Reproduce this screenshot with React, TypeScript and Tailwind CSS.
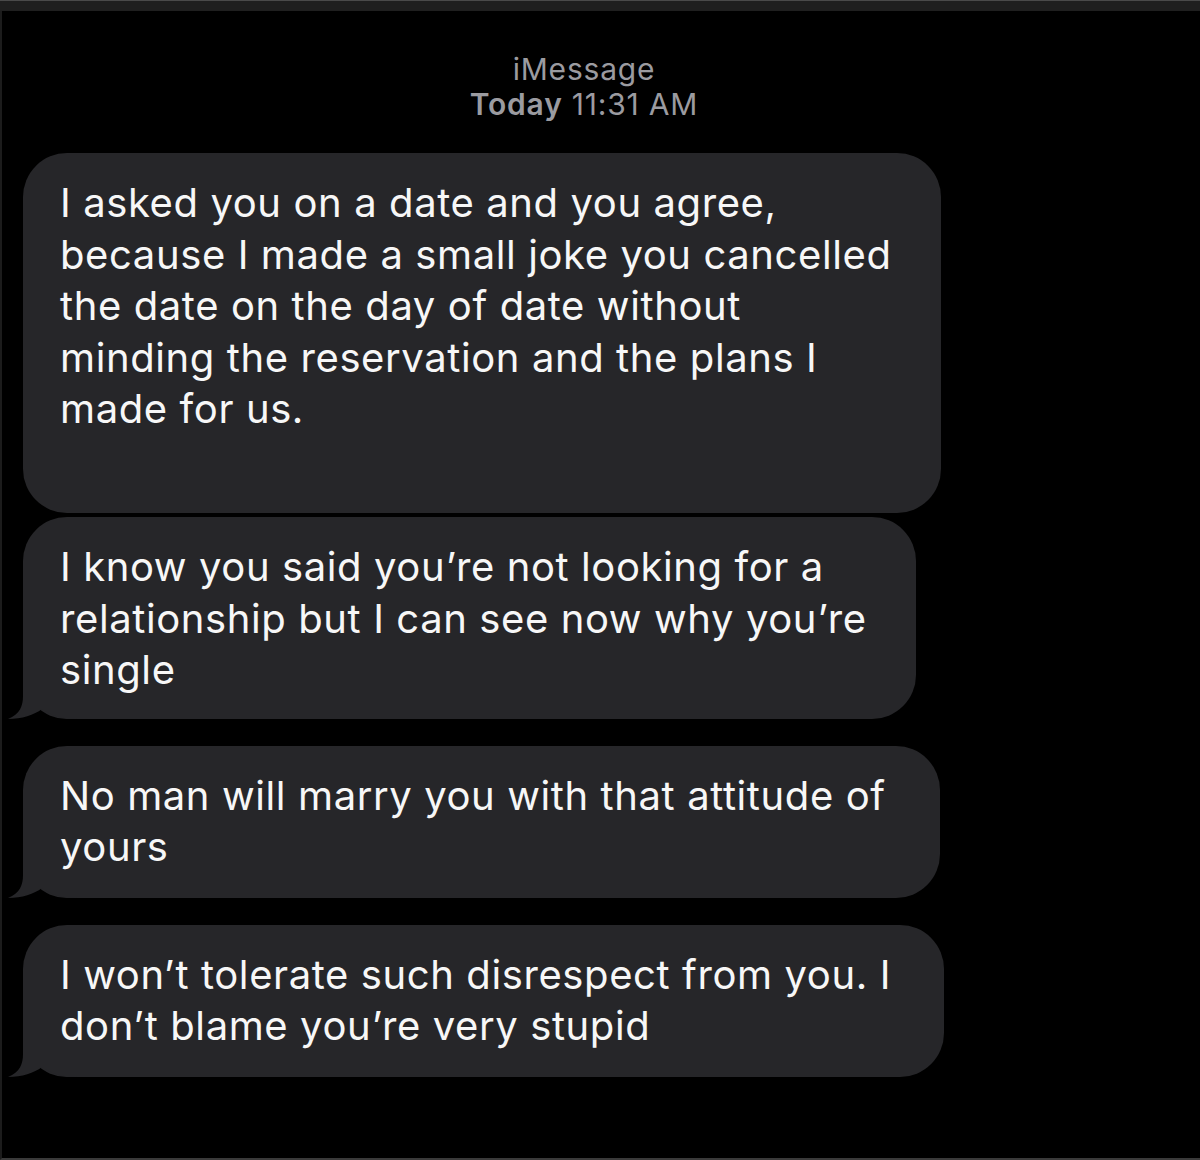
import React from "react";

type Message = {
  id: string;
  lines: string[];
  width: string;
  tail?: boolean;
  spacing: string;
};

const messages: Message[] = [
  {
    id: "m1",
    width: "w-[918px]",
    spacing: "mt-[31px] pb-[27px]",
    lines: [
      "I asked you on a date and you agree,",
      "because I made a small joke you cancelled",
      "the date on the day of date without",
      "minding the reservation and the plans I",
      "made for us.",
      "",
    ],
  },
  {
    id: "m2",
    width: "w-[893px]",
    spacing: "mt-[4px] pb-[23px]",
    tail: true,
    lines: [
      "I know you said you’re not looking for a",
      "relationship but I can see now why you’re",
      "single",
    ],
  },
  {
    id: "m3",
    width: "w-[917px]",
    spacing: "mt-[27px] pb-[25px]",
    tail: true,
    lines: ["No man will marry you with that attitude of", "yours"],
  },
  {
    id: "m4",
    width: "w-[921px]",
    spacing: "mt-[27px] pb-[25px]",
    tail: true,
    lines: ["I won’t tolerate such disrespect from you. I", "don’t blame you’re very stupid"],
  },
];

// little curl at the bottom-left of the last bubble in a run
function BubbleTail() {
  return (
    <svg
      className="absolute left-[-15px] bottom-0"
      width="70"
      height="45"
      viewBox="0 0 70 45"
    >
      <path
        d="M15 0 L15 22 C15 32 12 40 0 45 C14 45 26 41 34 35 C44 42 54 45 70 45 L70 0 Z"
        fill="#262629"
      />
    </svg>
  );
}

function Bubble({ msg }: { msg: Message }) {
  return (
    <div
      className={`relative ${msg.width} ${msg.spacing} rounded-[44px] bg-[#262629] pl-[37px] pt-[24px]`}
    >
      {msg.tail && <BubbleTail />}
      <div className="relative text-[40px] leading-[51.5px] tracking-[0.6px] text-[#f7f7f7] whitespace-pre">
        {msg.lines.map((line, i) => (
          <div key={i} className="h-[51.5px]">
            {line}
          </div>
        ))}
      </div>
    </div>
  );
}

export default function App() {
  return (
    <div
      className="w-[1200px] h-[1160px] bg-black overflow-hidden flex flex-col"
      style={{ fontFamily: "Inter, 'Liberation Sans', sans-serif" }}
    >
      <div className="h-[11px] shrink-0 bg-[#1f1f1f] border-t border-[#4a4a4a]" />
      <div className="flex-1 flex flex-col border-l-2 border-[#1c1c1c] border-b-2 border-b-[#3a3a3a]">
        <div className="pt-[41px] pr-[34px] flex flex-col items-center text-[30px] leading-[35px] tracking-[0.8px] text-[#9b9ba0]">
          <div>iMessage</div>
          <div>
            <span className="font-semibold">Today</span> 11:31 AM
          </div>
        </div>
        <div className="pl-[21px] flex flex-col">
          {messages.map((m) => (
            <Bubble key={m.id} msg={m} />
          ))}
        </div>
      </div>
    </div>
  );
}
